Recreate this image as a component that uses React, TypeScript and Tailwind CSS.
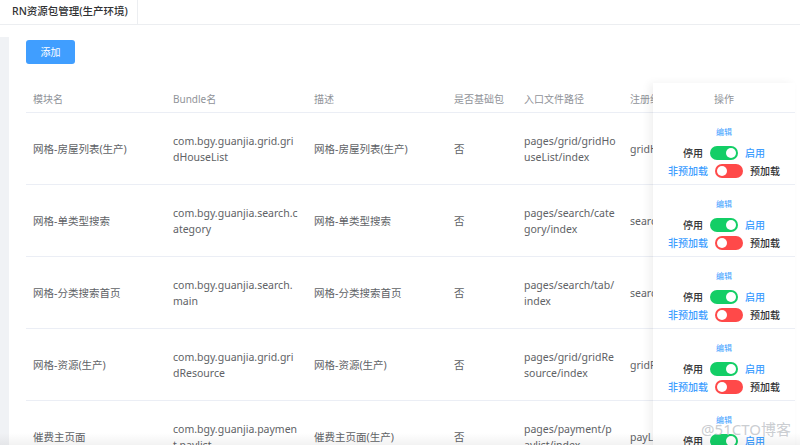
import { Fragment } from 'react'

type Row = {
  name: string
  bundle: string[]
  desc: string
  base: string
  entry: string[]
  reg: string
}

// lines are kept as the table wraps them (break-all at the column width)
const rows: Row[] = [
  { name: '网格-房屋列表(生产)', bundle: ['com.bgy.guanjia.grid.gri', 'dHouseList'], desc: '网格-房屋列表(生产)', base: '否', entry: ['pages/grid/gridHo', 'useList/index'], reg: 'gridHouseList' },
  { name: '网格-单类型搜索', bundle: ['com.bgy.guanjia.search.c', 'ategory'], desc: '网格-单类型搜索', base: '否', entry: ['pages/search/cate', 'gory/index'], reg: 'searchCategory' },
  { name: '网格-分类搜索首页', bundle: ['com.bgy.guanjia.search.', 'main'], desc: '网格-分类搜索首页', base: '否', entry: ['pages/search/tab/', 'index'], reg: 'searchMain' },
  { name: '网格-资源(生产)', bundle: ['com.bgy.guanjia.grid.gri', 'dResource'], desc: '网格-资源(生产)', base: '否', entry: ['pages/grid/gridRe', 'source/index'], reg: 'gridResource' },
  { name: '催费主页面', bundle: ['com.bgy.guanjia.paymen', 't.paylist'], desc: '催费主页面(生产)', base: '否', entry: ['pages/payment/p', 'aylist/index'], reg: 'payList' },
]

const headers = ['模块名', 'Bundle名', '描述', '是否基础包', '入口文件路径', '注册组件名']
const widths = ['w-[140px]', 'w-[141px]', 'w-[140px]', 'w-[70px]', 'w-[106px]', 'w-[172px]']

function Toggle({ on }: { on: boolean }) {
  return (
    <span
      className={`relative inline-flex h-[14px] w-[28px] shrink-0 items-center rounded-full ${
        on ? 'justify-end bg-[#13ce66]' : 'justify-start bg-[#ff4949]'
      } px-[2px]`}
    >
      <span className="h-[10px] w-[10px] rounded-full bg-white" />
    </span>
  )
}

function OpCell() {
  return (
    <div className="flex h-[72px] flex-col items-center border-b border-[#ebeef5] pt-[13px]">
      <span className="text-[8px] leading-[12px] text-[#409eff]">编辑</span>
      <div className="mt-[8px] flex h-[14px] items-center gap-[7px] text-[10px] font-medium">
        <span className="text-[#303133]">停用</span>
        <Toggle on />
        <span className="text-[#409eff]">启用</span>
      </div>
      <div className="mt-[4px] flex h-[14px] items-center gap-[7px] text-[10px] font-medium">
        <span className="text-[#409eff]">非预加载</span>
        <Toggle on={false} />
        <span className="text-[#303133]">预加载</span>
      </div>
    </div>
  )
}

function Lines({ lines }: { lines: string[] }) {
  return (
    <>
      {lines.map((l) => (
        <span key={l} className="block whitespace-nowrap">
          {l}
        </span>
      ))}
    </>
  )
}

export default function App() {
  return (
    <div
      className="relative h-[445px] w-[800px] overflow-hidden bg-white"
      style={{ fontFamily: '"Noto Sans", "Noto Sans CJK SC", sans-serif' }}
    >
      {/* Tabs */}
      <div className="flex h-[25px] border-b border-[#eceef1]">
        <div className="flex w-[138px] items-center border-r border-[#eceef1] pl-[12px] text-[10.5px] font-medium text-[#303133]">
          RN资源包管理(生产环境)
        </div>
      </div>

      <div className="flex">
        <div className="mt-[12px] h-[420px] w-[9px] bg-[#f0f2f5]" />
        <div className="flex-1 pl-[17px] pt-[15px]">
          <button className="block h-[24px] w-[49px] rounded-[3px] bg-[#409eff] text-[10px] text-white">
            添加
          </button>

          {/* Table */}
          <div className="relative mt-[22px] w-[769px]">
            <div className="flex h-[27px] items-center border-b border-[#ebeef5] text-[10px] text-[#909399]">
              {headers.map((h, i) => (
                <div key={h} className={`${widths[i]} shrink-0 whitespace-nowrap px-[7px]`}>
                  {h}
                </div>
              ))}
            </div>
            {rows.map((r) => (
              <div
                key={r.name}
                className="flex h-[72px] items-center border-b border-[#ebeef5] text-[10.5px] leading-[16px] text-[#606266]"
              >
                <div className={`${widths[0]} shrink-0 px-[7px]`}>{r.name}</div>
                <div className={`${widths[1]} shrink-0 px-[7px]`}>
                  <Lines lines={r.bundle} />
                </div>
                <div className={`${widths[2]} shrink-0 px-[7px]`}>{r.desc}</div>
                <div className={`${widths[3]} shrink-0 px-[7px]`}>{r.base}</div>
                <div className={`${widths[4]} shrink-0 px-[7px]`}>
                  <Lines lines={r.entry} />
                </div>
                <div className={`${widths[5]} shrink-0 whitespace-nowrap px-[7px]`}>{r.reg}</div>
              </div>
            ))}

            {/* Fixed right column */}
            <div className="absolute right-0 top-[-3px] bottom-0 w-[142px] bg-white shadow-[-4px_0_8px_rgba(0,0,0,0.06)]">
              <div className="flex h-[30px] items-center justify-center border-b border-[#ebeef5] pt-[3px] text-[10px] text-[#909399]">
                操作
              </div>
              {rows.map((r) => (
                <Fragment key={r.name}>
                  <OpCell />
                </Fragment>
              ))}
            </div>
          </div>
        </div>
      </div>

      {/* bottom shade + watermark */}
      <div className="pointer-events-none absolute bottom-0 left-0 right-0 h-[12px] bg-gradient-to-b from-transparent to-black/5" />
      <div className="pointer-events-none absolute bottom-[5px] right-[9px] text-[15px] text-[#c4c7cc]/90">
        @51CTO博客
      </div>
    </div>
  )
}
